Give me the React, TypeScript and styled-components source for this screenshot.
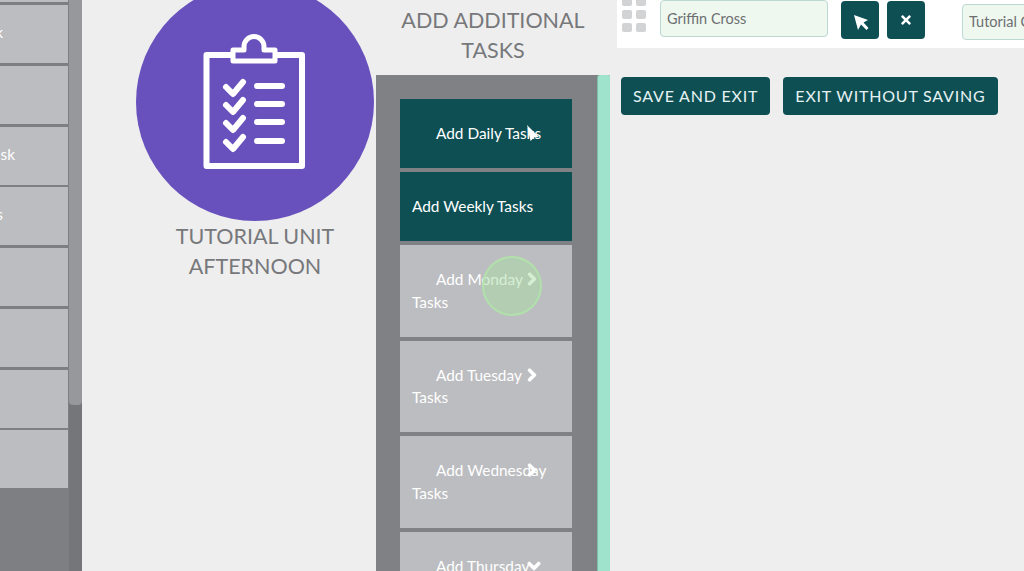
import React from "react";
import styled, { createGlobalStyle } from "styled-components";
import { FaChevronDown, FaChevronRight, FaTimes } from "react-icons/fa";

const GlobalStyle = createGlobalStyle`
    html, body {
        margin: 0;
        height: 100%;
        overflow: hidden;
        background: #eeeeee;
        font-family: Lato, "Open Sans", sans-serif;
    }
`;

const leftRows = [
    { text: "", end: 0 },
    { text: "Add Task", end: 65 },
    { text: "", end: 0 },
    { text: "Add Task", end: 53 },
    { text: "Add Tasks", end: 65 },
    { text: "", end: 0 },
    { text: "", end: 0 },
    { text: "", end: 0 },
    { text: "", end: 0 },
];

interface ITaskRow {
    label: string,
    tail?: string,
    active?: boolean,
    indent?: boolean,
    chevron?: "right" | "down",
    pointer?: boolean,
    touch?: boolean
}

const taskRows: ITaskRow[] = [
    { label: "Add Daily Tasks", active: true, indent: true, pointer: true },
    { label: "Add Weekly Tasks", active: true },
    { label: "Add Monday", tail: "Tasks", indent: true, chevron: "right", touch: true },
    { label: "Add Tuesday", tail: "Tasks", indent: true, chevron: "right" },
    { label: "Add Wednesday", tail: "Tasks", indent: true, chevron: "right" },
    { label: "Add Thursday", tail: "Tasks", indent: true, chevron: "down" },
];

const App: React.FC = () => {
    return (
        <Page>
            <GlobalStyle />
            <LeftPane>
                <RowList>
                    {leftRows.map((row, i) => (
                        <LeftRow key={i} $end={row.end}><span>{row.text}</span></LeftRow>
                    ))}
                </RowList>
                <LeftScroll>
                    <LeftThumb />
                </LeftScroll>
            </LeftPane>

            <UnitColumn>
                <UnitCircle>
                    <svg width="106" height="142" viewBox="0 0 106 142" fill="none" stroke="#fff" strokeWidth="6" strokeLinejoin="round" strokeLinecap="round">
                        <rect x="4.5" y="24" width="95.5" height="111" />
                        <path d="M31 30V19H42V15.500A10 10 0 0 1 62 15.500V19H73V30Z" fill="#6851bd" strokeWidth="5" />
                        {[55, 73, 91, 110].map((y) => (
                            <g key={y}>
                                <path d={`M24 ${y + 1}L31 ${y + 8}L41 ${y - 4}`} />
                                <path d={`M55 ${y}H80`} />
                            </g>
                        ))}
                    </svg>
                </UnitCircle>
                <Title>TUTORIAL UNIT<br />AFTERNOON</Title>
            </UnitColumn>

            <TasksColumn>
                <Heading>ADD ADDITIONAL<br />TASKS</Heading>
                <TasksPanel>
                    <TaskList>
                        {taskRows.map((row) => (
                            <TaskRow key={row.label} $active={row.active} $indent={row.indent}>
                                {row.label}
                                {row.tail && <TaskTail>{row.tail}</TaskTail>}
                                {row.chevron && (
                                    <Chevron $down={row.chevron === "down"}>
                                        {row.chevron === "right" ? <FaChevronRight /> : <FaChevronDown />}
                                    </Chevron>
                                )}
                                {row.pointer && (
                                    <RowPointer>
                                        <svg width="12" height="16" viewBox="0 0 12 16" fill="#fff">
                                            <path d="M0 0L12 12L7 12.500L3.500 16Z" />
                                        </svg>
                                    </RowPointer>
                                )}
                                {row.touch && <TouchMark />}
                            </TaskRow>
                        ))}
                    </TaskList>
                    <PanelThumb />
                </TasksPanel>
            </TasksColumn>

            <RightColumn>
                <Toolbar>
                    <DragHandle>
                        {Array.from({ length: 6 }).map((_, i) => <Dot key={i} />)}
                    </DragHandle>
                    <NameField readOnly value="Griffin Cross" />
                    <IconButton $first>
                        <svg width="20" height="20" viewBox="0 0 20 20" fill="#fff">
                            <path d="M4 5L18 10L13.500 12.500L18.500 18L16.500 20L11 14.500L8 20Z" />
                        </svg>
                    </IconButton>
                    <IconButton><FaTimes /></IconButton>
                    <UnitField readOnly value="Tutorial Client" />
                </Toolbar>
                <Actions>
                    <ActionButton>SAVE AND EXIT</ActionButton>
                    <ActionButton>EXIT WITHOUT SAVING</ActionButton>
                </Actions>
            </RightColumn>
        </Page>
    )
}

const Page = styled.div`
    display: flex;
    width: 1024px;
    height: 571px;
    overflow: hidden;
    background: #eeeeee;
`;

const LeftPane = styled.div`
    display: flex;
    flex: none;
    width: 82px;
    height: 571px;
    overflow: hidden;
    background: #7e7f83;
`;

const RowList = styled.div`
    display: flex;
    flex-direction: column;
    gap: 2.75px;
    flex: none;
    width: 68px;
    margin-top: -55.75px;
`;

const LeftRow = styled.div<{ $end: number }>`
    display: flex;
    flex: none;
    justify-content: flex-end;
    align-items: center;
    height: 58px;
    padding: 0 ${(p) => p.$end}px 4px 0;
    box-sizing: border-box;
    overflow: hidden;
    white-space: nowrap;
    background: #bcbdc0;
    color: #fff;
    font-size: 15.4px;

    span {
        flex: none;
    }
`;

const LeftScroll = styled.div`
    flex: none;
    width: 13px;
    margin-left: 1px;
    background: #75767a;
`;

const LeftThumb = styled.div`
    height: 405px;
    background: #97989b;
    border-radius: 0 0 4px 4px;
`;

const UnitColumn = styled.div`
    display: flex;
    flex-direction: column;
    align-items: center;
    flex: none;
    width: 238px;
    margin-left: 54px;
    margin-top: -17px;
`;

const UnitCircle = styled.div`
    display: flex;
    align-items: center;
    justify-content: center;
    flex: none;
    width: 238px;
    height: 238px;
    border-radius: 50%;
    background: #6851bd;
`;

const Title = styled.div`
    color: #77787b;
    font-size: 21.5px;
    font-weight: 400;
    line-height: 30px;
    text-align: center;
`;

const TasksColumn = styled.div`
    display: flex;
    flex-direction: column;
    flex: none;
    width: 234px;
    margin-left: 2px;
`;

const Heading = styled(Title)`
    flex: none;
    margin-top: 5px;
    height: 70px;
`;

const TasksPanel = styled.div`
    display: flex;
    flex: 1;
    min-height: 0;
    overflow: hidden;
    background: #808184;
`;

const TaskList = styled.div`
    display: flex;
    flex-direction: column;
    gap: 4px;
    flex: none;
    width: 172px;
    margin: 24px 0 0 24px;
`;

const TaskRow = styled.div<{ $active?: boolean, $indent?: boolean }>`
    position: relative;
    flex: none;
    padding: 23px 12px 23.5px;
    background: ${(p) => p.$active ? '#0e4f54' : '#bcbdc0'};
    color: #fff;
    font-size: 15.4px;
    line-height: 22.5px;
    text-indent: ${(p) => p.$indent ? '24px' : '0'};
`;

const TaskTail = styled.div`
    text-indent: 0;
`;

const Chevron = styled.span<{ $down: boolean }>`
    position: absolute;
    top: 27px;
    left: ${(p) => p.$down ? 127 : 125}px;
    font-size: 14px;
    line-height: 14px;
    text-indent: 0;

    svg {
        stroke: currentColor;
        stroke-width: 50;
    }
`;

const RowPointer = styled.span`
    position: absolute;
    top: 26px;
    left: 127px;
    line-height: 0;
    text-indent: 0;
`;

const TouchMark = styled.div`
    position: absolute;
    top: 11px;
    left: 82px;
    width: 60px;
    height: 60px;
    box-sizing: border-box;
    border: 2px solid rgba(178, 228, 170, 0.85);
    border-radius: 50%;
    background: rgba(170, 222, 165, 0.5);
`;

const PanelThumb = styled.div`
    flex: none;
    width: 13px;
    margin-left: 25px;
    background: #a0e3cc;
    border-left: 1px solid #7cbfa9;
    border-radius: 3px 3px 0 0;
`;

const RightColumn = styled.div`
    flex: none;
    width: 407px;
    margin-left: 7px;
`;

const Toolbar = styled.div`
    display: flex;
    align-items: flex-start;
    height: 48px;
    overflow: hidden;
    background: #fff;
`;

const DragHandle = styled.div`
    display: grid;
    grid-template-columns: 10px 10px;
    grid-auto-rows: 9px;
    gap: 4px;
    flex: none;
    margin: -3px 0 0 5px;
`;

const Dot = styled.span`
    background: #d1d3d4;
    border-radius: 2px;
`;

const NameField = styled.input`
    flex: none;
    width: 168px;
    height: 37px;
    margin-left: 14px;
    padding: 0 6px 1px;
    box-sizing: border-box;
    border: 1px solid #bcd8d4;
    border-radius: 4px;
    background: #eef8ef;
    color: #6d6e71;
    font-family: inherit;
    font-size: 14.5px;
    outline: none;
`;

const UnitField = styled(NameField)`
    width: 168px;
    height: 36px;
    margin: 4px 0 0 37px;
`;

const IconButton = styled.button<{ $first?: boolean }>`
    display: flex;
    align-items: center;
    justify-content: center;
    flex: none;
    width: 38px;
    height: 38px;
    margin: 1px 0 0 ${(p) => p.$first ? 13 : 8}px;
    padding: 0;
    border: none;
    border-radius: 4px;
    background: #0e4f54;
    color: #fff;
    font-size: 14px;
`;

const Actions = styled.div`
    display: flex;
    gap: 13px;
    margin: 29px 0 0 4px;
`;

const ActionButton = styled.button`
    height: 38px;
    padding: 0 12px 2px;
    border: none;
    border-radius: 4px;
    background: #0e4f54;
    color: #e6f2f2;
    font-family: inherit;
    font-size: 16px;
    letter-spacing: 0.8px;
    white-space: nowrap;
`;

export default App
